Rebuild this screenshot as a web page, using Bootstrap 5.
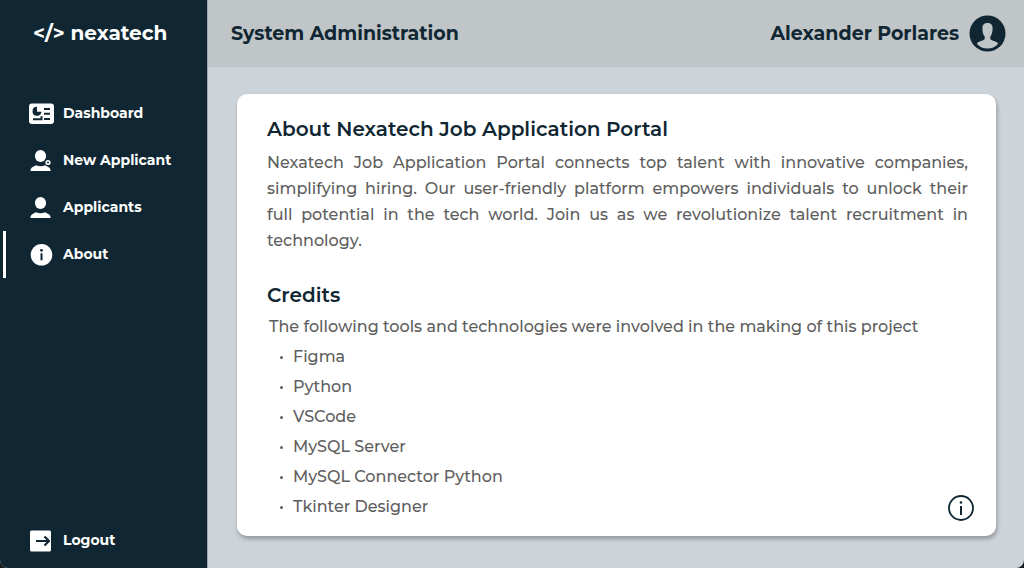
<!DOCTYPE html>
<html lang="en">
<head>
<meta charset="utf-8">
<meta name="viewport" content="width=device-width, initial-scale=1">
<title>Nexatech – System Administration</title>
<link href="https://cdn.jsdelivr.net/npm/bootstrap@5.3.0/dist/css/bootstrap.min.css" rel="stylesheet">
<style>
  :root { --navy: #102733; --ink: #5e5e5e; }
  body { font-family: Montserrat, Inter, sans-serif; background: #17191b; color: var(--ink); }
  .shell { overflow: hidden; border-radius: 0 0 8px 8px; background: #ccd3d9; }
  .side { width: 208px; background: var(--navy); border-right: 1px solid #98a3aa; }
  .brand { font-size: 20px; line-height: 24px; font-weight: 700; padding: 21px 0 0 33px; }
  .side-menu { margin-top: 45px; }
  .side-link { height: 47px; padding-left: 23px; margin-left: 3px; border-left: 3px solid transparent; border-radius: 0;
    color: #fff; font-size: 14px; font-weight: 700; gap: 9px; }
  .side-link:hover, .side-link:focus { color: #fff; }
  .side-link.active { border-left-color: #fff; }
  .topbar { height: 67px; background: #c0c5c7; color: var(--navy); padding: 0 18px 0 23px; }
  .topbar h1, .who { font-size: 19px; line-height: 24px; font-weight: 700; }
  .who { gap: 10px; color: var(--navy); }
  .page { padding: 27px 28px 32px 29px; }
  .panel { border-radius: 10px; padding: 22px 28px 14px 30px; box-shadow: 1px 3px 4px rgba(0, 0, 0, .28); }
  .panel h2 { color: var(--navy); font-size: 20px; line-height: 26px; font-weight: 600; }
  .about { font-size: 16px; line-height: 26px; font-weight: 500; text-align: justify; margin: 8px 0 28px; }
  .credits { font-size: 16px; line-height: 30px; font-weight: 500; }
  .credits p { padding-left: 2px; }
  .credits ul { padding-left: 26px; }
  .credits li { list-style: none; position: relative; }
  .credits li::before { content: ""; position: absolute; left: -13px; top: 14px; width: 3px; height: 3px; border-radius: 50%; background: var(--ink); }
  .info { right: 22px; bottom: 15px; color: var(--navy); }
</style>
</head>
<body>
<div class="shell d-flex min-vh-100">
  <aside class="side d-flex flex-column flex-shrink-0 text-white">
    <a class="brand text-white text-decoration-none" href="#">&lt;/&gt; nexatech</a>
    <nav class="side-menu nav flex-column" aria-label="Main">
      <a class="side-link nav-link d-flex align-items-center py-0 pe-0" href="#">
        <svg width="25" height="22" viewBox="0 0 25 22" aria-hidden="true"><rect y=".5" width="25" height="20.500" rx="3" fill="#fff"/><g fill="none" stroke="#102733" stroke-width="2"><path d="M15 6h6M15 10.800h6M15 16h6M4 16.300h8.500v-3"/></g><path d="M8 3.800a4.500 4.500 0 1 0 4.500 5H8z" fill="#102733"/></svg>
        Dashboard</a>
      <a class="side-link nav-link d-flex align-items-center py-0 pe-0" href="#">
        <svg width="25" height="22" viewBox="0 0 25 22" aria-hidden="true"><g fill="#fff"><ellipse cx="11.500" cy="6" rx="5.600" ry="6"/><path d="M1.500 21v-1q0-2.500 5.500-4.800 4.500 2 9 0 5.500 2.300 5.500 4.800v1z"/></g><circle cx="19" cy="12.500" r="1.800" fill="none" stroke="#fff" stroke-width="1.600"/></svg>
        New Applicant</a>
      <a class="side-link nav-link d-flex align-items-center py-0 pe-0" href="#">
        <svg width="25" height="22" viewBox="0 0 25 22" aria-hidden="true"><g fill="#fff"><ellipse cx="11.500" cy="6" rx="5.600" ry="6"/><path d="M1.500 21v-1q0-2.500 5.500-4.800 4.500 2 9 0 5.500 2.300 5.500 4.800v1z"/></g></svg>
        Applicants</a>
      <a class="side-link nav-link d-flex align-items-center py-0 pe-0 active" href="#" aria-current="page">
        <svg width="25" height="22" viewBox="0 0 25 22" aria-hidden="true"><circle cx="12.500" cy="10.800" r="10.800" fill="#fff"/><circle cx="12.500" cy="6.300" r="1.400" fill="#102733"/><path d="M12.500 9.300v7" stroke="#102733" stroke-width="2"/></svg>
        About</a>
    </nav>
    <a class="side-link nav-link d-flex align-items-center py-0 pe-0 mt-auto mb-1" href="#">
      <svg width="25" height="22" viewBox="0 0 25 22" aria-hidden="true"><rect x="1" y=".5" width="21" height="21" rx="1.500" fill="#fff"/><path d="M7 11h13M15.500 6.500 20 11l-4.500 4.500" fill="none" stroke="#102733" stroke-width="2.200" stroke-linejoin="round"/></svg>
      Logout</a>
  </aside>
  <div class="flex-grow-1 d-flex flex-column">
    <header class="topbar d-flex align-items-center justify-content-between">
      <h1 class="m-0">System Administration</h1>
      <a class="who d-flex align-items-center text-decoration-none" href="#">Alexander Porlares
        <svg width="37" height="37" viewBox="0 0 37 37" aria-hidden="true"><circle cx="18.500" cy="18.500" r="18" fill="#102733"/><path d="M18.500 8c-4 0-5.500 2.500-5 6.500 0 3 .8 5.500 2.200 7v2.500c-1 2-7.700 2-7.700 5 3 3 6 4.500 10.500 4.500S26 32 29 29c0-3-6.700-3-7.700-5v-2.500c1.400-1.500 2.200-4 2.200-7 .5-4-1-6.500-5-6.500z" fill="#c0c5c7"/></svg>
      </a>
    </header>
    <main class="page flex-grow-1 d-flex">
      <article class="panel bg-white position-relative flex-grow-1">
        <h2 class="m-0">About Nexatech Job Application Portal</h2>
        <p class="about">Nexatech Job Application Portal connects top talent with innovative companies, simplifying hiring. Our user-friendly platform empowers individuals to unlock their full&nbsp;potential in the tech world. Join us as we revolutionize talent recruitment in technology.</p>
        <h2 class="m-0">Credits</h2>
        <div class="credits">
          <p class="mb-0 mt-1">The following tools and technologies were involved in the making of this project</p>
          <ul class="m-0">
            <li>Figma</li><li>Python</li><li>VSCode</li><li>MySQL Server</li><li>MySQL Connector Python</li><li>Tkinter Designer</li>
          </ul>
        </div>
        <button class="info btn p-0 border-0 lh-1 position-absolute" type="button" aria-label="Information">
          <svg width="26" height="26" viewBox="0 0 26 26"><circle cx="13" cy="13" r="12" fill="none" stroke="currentColor" stroke-width="1.800"/><circle cx="13" cy="7.500" r="1.300" fill="currentColor"/><path d="M13 11v9" stroke="currentColor" stroke-width="2"/></svg>
        </button>
      </article>
    </main>
  </div>
</div>
<script src="https://cdn.jsdelivr.net/npm/bootstrap@5.3.0/dist/js/bootstrap.bundle.min.js"></script>
</body>
</html>
